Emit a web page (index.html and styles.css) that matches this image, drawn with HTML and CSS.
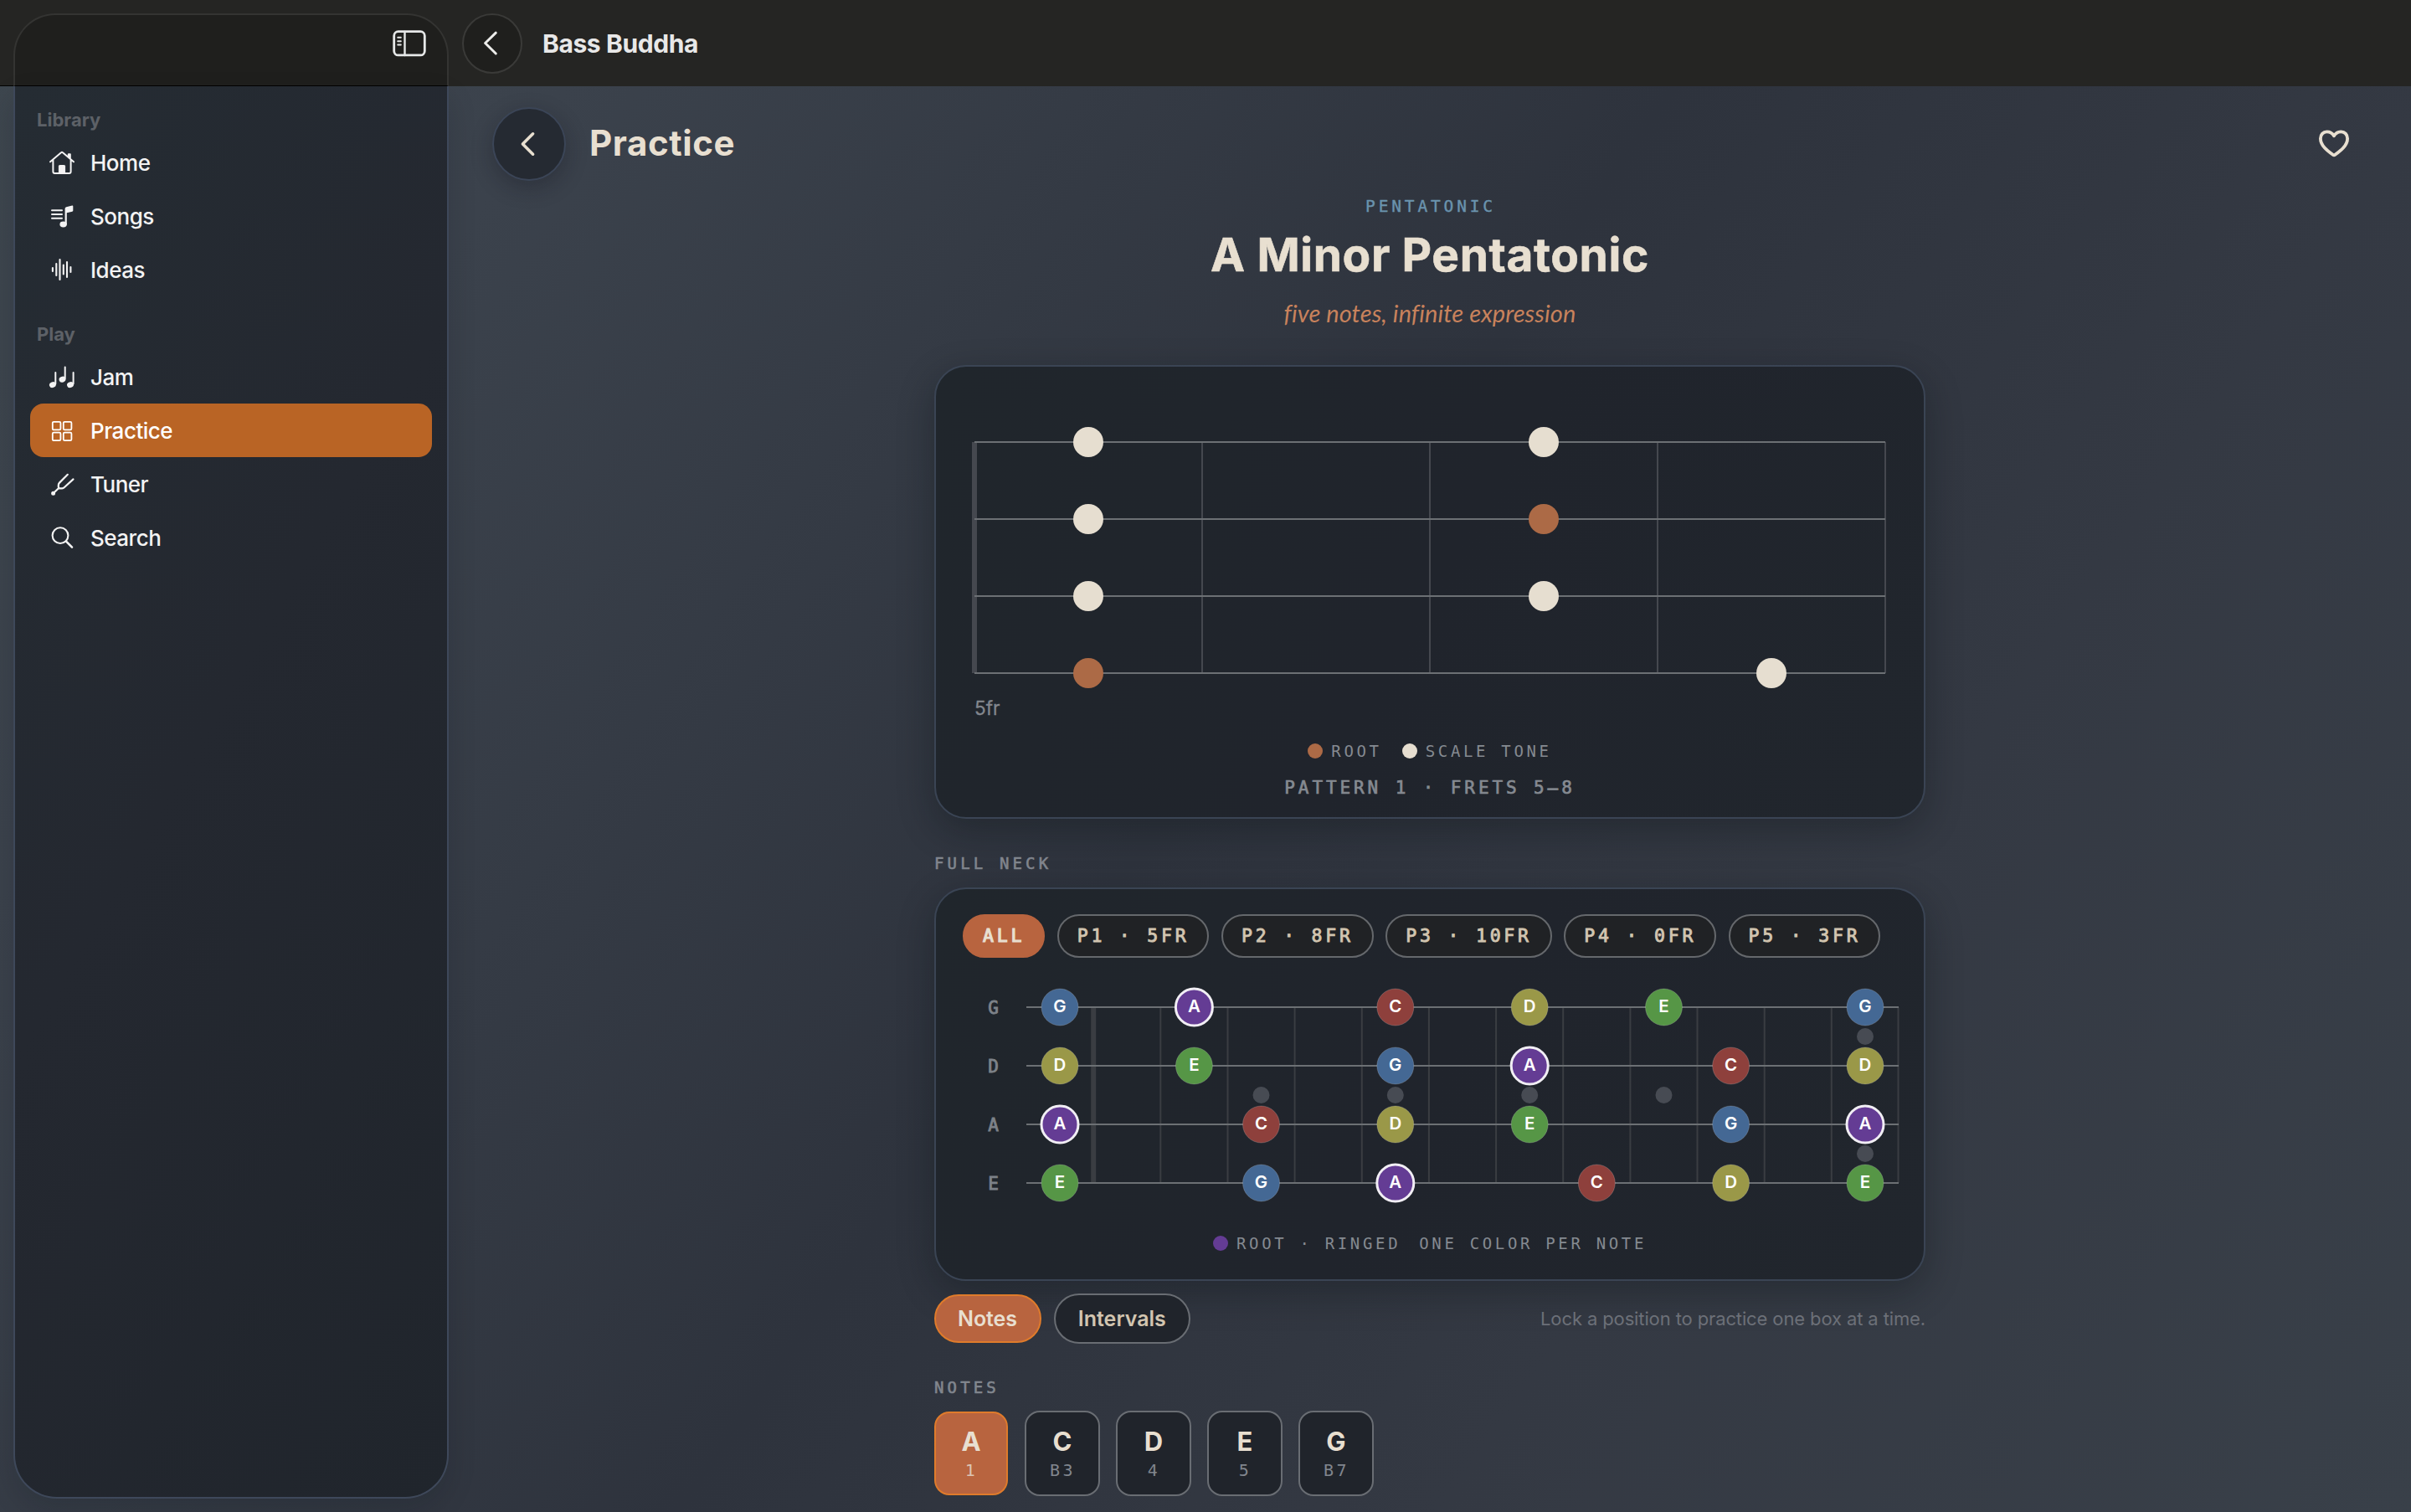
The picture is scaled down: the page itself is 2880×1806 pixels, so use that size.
FILE: index.html
```html
<!DOCTYPE html>
<html lang="en">
<head>
<meta charset="utf-8">
<title>Bass Buddha</title>
<link rel="stylesheet" href="styles.css">
</head>
<body>
<div class="app">
  <aside class="sidebar">
    <div class="sidebar-top">
      <svg class="toggle" width="40" height="32" viewBox="0 0 40 32" fill="none" stroke="#e6e8e8" stroke-width="2.8" stroke-linecap="round"><rect x="1.7" y="1.7" width="36.6" height="28.2" rx="5"/><path d="M14.5 2v28" stroke-width="2.4"/><path d="M6.2 8.8h3.6M6.2 13.2h3.6M6.2 17.6h3.6" stroke-width="2"/></svg>
    </div>
    <nav class="nav">
      <h2 class="nav-title">Library</h2>
      <a class="nav-item"><svg class="nav-icon" viewBox="0 0 32 32" fill="none" stroke="currentColor" stroke-width="2" stroke-linecap="round" stroke-linejoin="round"><path d="M2 15.3 15 4.3a1.5 1.5 0 0 1 2 0l13 11M5.4 13v14a2 2 0 0 0 2 2h17.2a2 2 0 0 0 2-2V13M25.8 11V6.3h-2v3"/><path d="M12.4 28.5v-8.2q0-.8.8-.8h5.6q.8 0 .8.8v8.2z" fill="currentColor" stroke-width="1"/></svg>Home</a>
      <a class="nav-item"><svg class="nav-icon" viewBox="0 0 32 32" fill="none" stroke="currentColor" stroke-width="2" stroke-linecap="round"><path d="M4 9.2h12M4 14h12M4 18.8h12"/><ellipse cx="17.6" cy="26" rx="4.2" ry="3.4" fill="currentColor" stroke="none"/><path d="M19.6 26.5V7.2q0-1.6 1.6-2l7-1.6q1.1-.2 1.1.9v4.9q0 1-1.1 1.3l-6.4 1.5v14.3z" fill="currentColor" stroke="none"/></svg>Songs</a>
      <a class="nav-item"><svg class="nav-icon" viewBox="0 0 32 32" fill="none" stroke="currentColor" stroke-width="2.1" stroke-linecap="round"><path d="M4.9 14v4M9.3 9v14M13.5 4v24M17.8 10.5v11M22 7v18M26.4 13v6"/></svg>Ideas</a>
      <h2 class="nav-title nav-title-next">Play</h2>
      <a class="nav-item"><svg class="nav-icon" viewBox="0 0 32 32" fill="none" stroke="currentColor" stroke-width="2" stroke-linecap="round"><g fill="currentColor" stroke="none"><ellipse cx="4.9" cy="25.6" rx="4" ry="3.4" transform="rotate(-20 4.9 25.6)"/><ellipse cx="16.5" cy="19.2" rx="4" ry="3.4" transform="rotate(-20 16.5 19.2)"/><ellipse cx="26" cy="25.6" rx="4" ry="3.4" transform="rotate(-20 26 25.6)"/></g><path d="M8.3 24.6V11M19.7 18V4.6M29.6 24.6V11"/></svg>Jam</a>
      <a class="nav-item active"><svg class="nav-icon" viewBox="0 0 32 32" fill="none" stroke="currentColor" stroke-width="1.8"><rect x="4.8" y="5.8" width="9.6" height="9.6" rx="1.4"/><rect x="17.8" y="5.8" width="9.6" height="9.6" rx="1.4"/><rect x="4.8" y="18.6" width="9.6" height="9.6" rx="1.4"/><rect x="17.8" y="18.6" width="9.6" height="9.6" rx="1.4"/></svg>Practice</a>
      <a class="nav-item"><svg class="nav-icon" viewBox="0 0 32 32" fill="none" stroke="currentColor" stroke-width="2.2" stroke-linecap="round" stroke-linejoin="round"><path d="M22.8 4.8 13 14.6q-1.2 1.2-1.2 3v2q0 1.8 1.8 1.8h2.6q1.4 0 2.5-1.1l10.8-9.900M11.9 21.3 5.5 27.4"/><circle cx="5.6" cy="27.2" r="1.4" fill="currentColor"/></svg>Tuner</a>
      <a class="nav-item"><svg class="nav-icon" viewBox="0 0 32 32" fill="none" stroke="currentColor" stroke-width="2.1" stroke-linecap="round"><circle cx="14" cy="13.6" r="9.4"/><path d="m21 20.6 7 7" stroke-width="2.6"/></svg>Search</a>
    </nav>
  </aside>

  <main class="main">
    <header class="topbar">
      <a class="round round-small"><svg width="20" height="32" viewBox="0 0 20 32" fill="none" stroke="#ececea" stroke-width="3" stroke-linecap="round" stroke-linejoin="round"><path d="M16.3 3.2 3.6 15.5 16.3 28"/></svg></a>
      <span class="app-name">Bass Buddha</span>
    </header>
    <header class="page-head">
      <a class="round round-large"><svg width="20" height="32" viewBox="0 0 20 32" fill="none" stroke="#e8dfd0" stroke-width="3.6" stroke-linecap="round" stroke-linejoin="round"><path d="M16.6 3.8 4.4 16l12.2 12.2"/></svg></a>
      <h1 class="page-title">Practice</h1>
      <svg class="heart" width="40" height="40" viewBox="0 0 40 40" fill="none" stroke="#e8dfd0" stroke-width="3.8" stroke-linejoin="round"><path d="M20 10.3C17.6 6.2 14 5.3 11.400 5.300 7.200 5.300 3.900 8.800 3.900 13.500c0 8.600 8.600 14.800 14.700 19.300q1.400 1 2.800 0c6.100-4.500 14.700-10.700 14.700-19.300 0-4.700-3.300-8.200-7.500-8.200-2.600 0-6.200.9-8.600 5z"/></svg>
    </header>

    <section class="content">
      <p class="kicker">PENTATONIC</p>
      <h2 class="scale-name">A Minor Pentatonic</h2>
      <p class="tagline">five notes, infinite expression</p>

      <div class="card">
        <svg class="board" width="1180" height="440" viewBox="0 0 1180 440">
          <g stroke="#45484f" stroke-width="2"><path d="M46 90v276" stroke-width="6"/><path d="M318 90v276M590 90v276M862 90v276M1134 90v276"/></g>
          <path d="M46 90H1134M46 182H1134M46 274H1134M46 366H1134" stroke="#6c7074" stroke-width="2"/>
          <g fill="#e6ded0"><circle cx="182" cy="90" r="18"/><circle cx="726" cy="90" r="18"/><circle cx="182" cy="182" r="18"/><circle cx="182" cy="274" r="18"/><circle cx="726" cy="274" r="18"/><circle cx="998" cy="366" r="18"/></g>
          <g fill="#ac6a46"><circle cx="726" cy="182" r="18"/><circle cx="182" cy="366" r="18"/></g>
          <text class="fret-label" x="46" y="416">5fr</text>
        </svg>
        <div class="legend"><i class="dot dot-root"></i><span>ROOT</span><i class="dot dot-tone"></i><span>SCALE TONE</span></div>
        <p class="pattern">PATTERN 1 · FRETS 5–8</p>
      </div>

      <h3 class="label">FULL NECK</h3>
      <div class="card">
        <div class="chips">
          <span class="chip chip-on">ALL</span><span class="chip">P1 · 5FR</span><span class="chip">P2 · 8FR</span><span class="chip">P3 · 10FR</span><span class="chip">P4 · 0FR</span><span class="chip">P5 · 3FR</span>
        </div>
        <svg class="neck" width="1180" height="310" viewBox="0 0 1180 310">
          <g stroke="#3a3d42" stroke-width="2"><path d="M188.200 59v210" stroke-width="6"/><path d="M268.300 59v210M348.500 59v210M428.600 59v210M508.800 59v210M588.900 59v210M669.100 59v210M749.200 59v210M829.400 59v210M909.500 59v210M989.700 59v210M1069.800 59v210M1149.500 59v210"/></g>
          <path d="M108 59H1150M108 129H1150M108 199H1150M108 269H1150" stroke="#6c7074" stroke-width="2"/>
          <g fill="#474b53"><circle cx="388.500" cy="164" r="10"/><circle cx="548.800" cy="164" r="10"/><circle cx="709.200" cy="164" r="10"/><circle cx="869.500" cy="164" r="10"/><circle cx="1110" cy="94" r="10"/><circle cx="1110" cy="234" r="10"/></g>
          <g class="string-name"><text x="68.500" y="67">G</text><text x="68.500" y="137">D</text><text x="68.500" y="207">A</text><text x="68.500" y="277">E</text></g>
          <g class="c-g"><circle cx="148" cy="59" r="22"/><circle cx="1110" cy="59" r="22"/><circle cx="548.800" cy="129" r="22"/><circle cx="949.600" cy="199" r="22"/><circle cx="388.500" cy="269" r="22"/></g>
          <g class="c-d"><circle cx="709.200" cy="59" r="22"/><circle cx="148" cy="129" r="22"/><circle cx="1110" cy="129" r="22"/><circle cx="548.800" cy="199" r="22"/><circle cx="949.600" cy="269" r="22"/></g>
          <g class="c-e"><circle cx="869.500" cy="59" r="22"/><circle cx="308.400" cy="129" r="22"/><circle cx="709.200" cy="199" r="22"/><circle cx="148" cy="269" r="22"/><circle cx="1110" cy="269" r="22"/></g>
          <g class="c-c"><circle cx="548.800" cy="59" r="22"/><circle cx="949.600" cy="129" r="22"/><circle cx="388.500" cy="199" r="22"/><circle cx="789.300" cy="269" r="22"/></g>
          <g class="c-a"><circle cx="308.400" cy="59" r="22"/><circle cx="709.200" cy="129" r="22"/><circle cx="148" cy="199" r="22"/><circle cx="1110" cy="199" r="22"/><circle cx="548.800" cy="269" r="22"/></g>
          <g class="note-name">
            <text x="148" y="65">G</text><text x="308.400" y="65">A</text><text x="548.800" y="65">C</text><text x="709.200" y="65">D</text><text x="869.500" y="65">E</text><text x="1110" y="65">G</text>
            <text x="148" y="135">D</text><text x="308.400" y="135">E</text><text x="548.800" y="135">G</text><text x="709.200" y="135">A</text><text x="949.600" y="135">C</text><text x="1110" y="135">D</text>
            <text x="148" y="205">A</text><text x="388.500" y="205">C</text><text x="548.800" y="205">D</text><text x="709.200" y="205">E</text><text x="949.600" y="205">G</text><text x="1110" y="205">A</text>
            <text x="148" y="275">E</text><text x="388.500" y="275">G</text><text x="548.800" y="275">A</text><text x="789.300" y="275">C</text><text x="949.600" y="275">D</text><text x="1110" y="275">E</text>
          </g>
        </svg>
        <div class="legend legend-neck"><i class="dot dot-ring"></i><span>ROOT · RINGED</span><span class="legend-extra">ONE COLOR PER NOTE</span></div>
      </div>

      <div class="modes">
        <span class="mode mode-on">Notes</span><span class="mode">Intervals</span>
        <span class="hint">Lock a position to practice one box at a time.</span>
      </div>

      <h3 class="label label-notes">NOTES</h3>
      <div class="tiles">
        <div class="tile tile-on"><b>A</b><span>1</span></div>
        <div class="tile"><b>C</b><span>B3</span></div>
        <div class="tile"><b>D</b><span>4</span></div>
        <div class="tile"><b>E</b><span>5</span></div>
        <div class="tile"><b>G</b><span>B7</span></div>
      </div>
    </section>
  </main>
</div>
</body>
</html>
```
FILE: styles.css
```css
* { box-sizing: border-box; margin: 0; padding: 0; }

body {
  width: 2880px;
  height: 1806px;
  overflow: hidden;
  font-family: Inter, "Liberation Sans", sans-serif;
  color: #e8dfd0;
  background:
    linear-gradient(#000, #000) 0 102px / 536px 1px no-repeat,
    linear-gradient(#252523, #252523) 0 0 / 100% 103px no-repeat,
    linear-gradient(125deg, #3e474f 0%, #3b424c 18%, #2e333d 50%, #343943 72%, #394049 100%);
}

.app { display: flex; height: 1806px; }

/* Sidebar */
.sidebar {
  width: 520px;
  height: 1774px;
  margin: 16px 0 0 16px;
  border-radius: 50px;
  flex: none;
  display: flex;
  flex-direction: column;
}
.sidebar-top {
  height: 87px;
  border: 2px solid #343432;
  border-bottom: 1px solid #000;
  border-radius: 50px 50px 0 0;
  background: #1f1f1d;
  display: flex;
  justify-content: flex-end;
  padding: 18px 25px 0 0;
}
.nav {
  flex: 1;
  padding: 1px 18px 0;
  border: 2px solid #3e485a;
  border-top: 0;
  border-radius: 0 0 52px 52px;
  background: linear-gradient(120deg, #252c33, #242830 45%, #20252c);
  box-shadow: 0 14px 34px rgba(10, 14, 20, .14);
}
.nav-title {
  height: 58px;
  padding: 25px 0 0 8px;
  font-size: 22px;
  line-height: 28px;
  font-weight: 700;
  letter-spacing: 0;
  color: #5d6167;
}
.nav-title-next { height: 64px; padding-top: 31px; }
.nav-item {
  height: 64px;
  display: flex;
  align-items: center;
  gap: 18px;
  padding-left: 22px;
  border-radius: 16px;
  font-size: 26px;
  font-weight: 500;
  letter-spacing: -.5px;
  color: #f3f3f3;
}
.nav-icon { width: 32px; height: 32px; }
.nav-item.active { background: #b96425; color: #fff; }

/* Headers */
.main { flex: 1; display: flex; flex-direction: column; align-items: center; }
.topbar { align-self: stretch; height: 104px; padding: 16px 0 16px 16px; display: flex; gap: 24px; }
.round { border-radius: 50%; display: flex; align-items: center; justify-content: center; }
.round-small { width: 72px; height: 72px; background: #1f1f1d; border: 2px solid #3a3a38; padding-right: 4px; }
.app-name { font-size: 30px; line-height: 72px; font-weight: 700; color: #e8e8e8; letter-spacing: -.4px; }
.page-head { align-self: stretch; padding: 24px 72px 0 52px; display: flex; align-items: center; gap: 28px; }
.round-large { width: 88px; height: 88px; background: #252a32; border: 2px solid #3b4557; padding-right: 5px; box-shadow: 0 8px 26px rgba(15, 18, 26, .3); }
.page-title { font-size: 42px; line-height: 50px; padding-bottom: 2px; font-weight: 700; letter-spacing: .6px; }
.heart { margin-left: auto; }

/* Content column */
.content { width: 1184px; display: flex; flex-direction: column; }
.kicker, .label, .legend, .pattern, .chip, .tile span, .string-name {
  font-family: "DejaVu Sans Mono", "Liberation Mono", monospace;
  line-height: 24px;
  white-space: pre;
}
.kicker { margin-top: 19px; padding-left: 2px; text-align: center; font-size: 19.5px; letter-spacing: 3.85px; color: #6a93ad; -webkit-text-stroke: .4px #6a93ad; }
.scale-name { margin-top: 13px; text-align: center; font-size: 55px; line-height: 64px; font-weight: 700; letter-spacing: .6px; -webkit-text-stroke: .6px #e8dfd0; }
.tagline { margin-top: 18px; text-align: center; font-family: Lato, sans-serif; font-style: italic; font-size: 29px; line-height: 40px; letter-spacing: .1px; color: #c8825c; }

.card {
  background: linear-gradient(120deg, #20262c, #20242c 50%, #21262d);
  border: 2px solid #3a4454;
  border-radius: 38px;
  box-shadow: 0 14px 44px rgba(10, 14, 20, .32);
}
.tagline + .card { margin-top: 42px; height: 542px; }
.label + .card { margin-top: 17px; height: 470px; }
.board, .neck { display: block; }
.fret-label { font-size: 22.500px; fill: #83878e; stroke: #83878e; stroke-width: .3px; }
.legend { display: flex; align-items: center; justify-content: center; margin-top: 7px; font-size: 19px; letter-spacing: 3.660px; color: #858a91; }
.dot { width: 18px; height: 18px; border-radius: 50%; margin-right: 10px; }
.dot-root { background: #ac6a46; }
.dot-tone { background: #e6ded0; margin-left: 24px; }
.dot-ring { background: #643c94; }
.pattern { margin-top: 20px; text-align: center; font-size: 21px; letter-spacing: 3.900px; color: #858a91; -webkit-text-stroke: .7px #858a91; }

.label { margin-top: 41px; font-size: 19px; letter-spacing: 4.150px; font-weight: 400; color: #81868e; -webkit-text-stroke: .6px #81868e; }

.chips { display: flex; gap: 14.500px; padding: 30px 0 0 32px; }
.chip {
  height: 52px;
  padding: 0 22px;
  border: 2px solid #65686c;
  border-radius: 26px;
  font-size: 21.500px;
  line-height: 48px;
  letter-spacing: 3.780px;
  color: #d2c5b0;
  -webkit-text-stroke: .9px #d2c5b0;
  background: #202225;
}
.chip-on { background: #b8643f; border-color: #b8643f; color: #e8dfd0; -webkit-text-stroke: 1.200px #e8dfd0; }
.string-name { font-size: 21px; fill: #7d8289; stroke: #7d8289; stroke-width: .9px; text-anchor: middle; }
.note-name { font-size: 20.500px; font-weight: 600; fill: #fff; text-anchor: middle; }
.c-g, .c-d, .c-e, .c-c { stroke: rgba(255, 255, 255, .18); stroke-width: 1; }
.c-g { fill: #446894; }
.c-d { fill: #9a9848; }
.c-e { fill: #569646; }
.c-c { fill: #8e403c; }
.c-a { fill: #643c94; stroke: #f1eef4; stroke-width: 3; }
.legend-neck { margin-top: 19px; }
.legend-extra { margin-left: 22px; }

.modes { margin-top: 15px; height: 60px; display: flex; align-items: center; }
.mode {
  height: 60px;
  padding: 0 27px;
  border: 2px solid #696d73;
  border-radius: 30px;
  font-size: 25px;
  line-height: 57px;
  font-weight: 600;
  letter-spacing: 0;
  color: #d2c5b0;
  background: #20242b;
}
.mode-on { height: 58px; margin-right: 15px; border-color: #df7b2b; background: #b8643f; color: #e8dfd0; padding: 0 27px 0 26px; line-height: 55px; letter-spacing: -.1px; }
.hint { margin-left: auto; font-size: 22px; letter-spacing: -.12px; color: #6c7078; }

.label-notes { margin-top: 40px; }
.tiles { margin-top: 16px; display: flex; align-items: center; gap: 19px; }
.tile {
  width: 90px;
  height: 102px;
  border: 2px solid #696d73;
  border-radius: 18px;
  background: #20242b;
  display: flex;
  flex-direction: column;
  align-items: center;
  padding-top: 17px;
}
.tile b { font-size: 31px; line-height: 36px; font-weight: 700; }
.tile span { margin-top: 4px; font-size: 20px; letter-spacing: 3.400px; color: #81868e; padding-left: 1px; }
.tile-on { width: 88px; height: 100px; margin-right: 1px; background: #b8643f; border-color: #df7b2b; padding-top: 16px; }
.tile-on span { color: #dcc5b4; }
```
